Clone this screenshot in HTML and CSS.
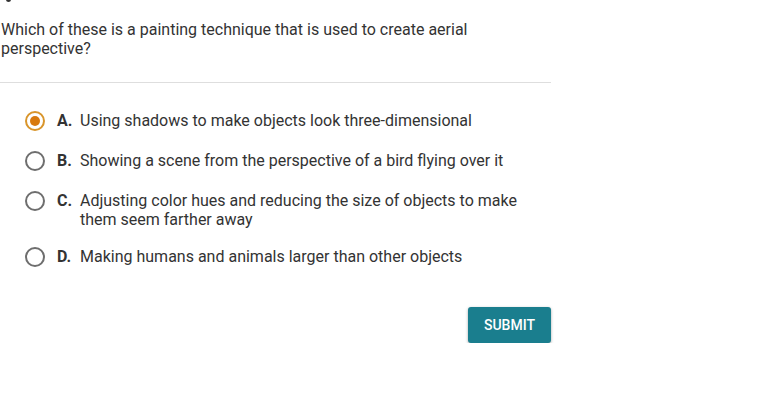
FILE: index.html
```html
<!DOCTYPE html>
<html>
<head>
<meta charset="utf-8">
<link rel="stylesheet" href="styles.css">
</head>
<body>
<div class="page">
  <div class="top-mark"></div>
  <div class="question">Which of these is a painting technique that is used to create aerial perspective?</div>
  <div class="divider"></div>
  <ul class="options">
    <li class="option selected"><span class="radio"></span><span class="letter">A.</span><span class="text">Using shadows to make objects look three-dimensional</span></li>
    <li class="option"><span class="radio"></span><span class="letter">B.</span><span class="text">Showing a scene from the perspective of a bird flying over it</span></li>
    <li class="option"><span class="radio"></span><span class="letter">C.</span><span class="text">Adjusting color hues and reducing the size of objects to make them seem farther away</span></li>
    <li class="option"><span class="radio"></span><span class="letter">D.</span><span class="text">Making humans and animals larger than other objects</span></li>
  </ul>
  <div class="actions"><button class="submit">SUBMIT</button></div>
</div>
</body>
</html>
```
FILE: styles.css
```css
html, body { margin: 0; padding: 0; background: #fff; }
body { font-family: Roboto, "Liberation Sans", sans-serif; color: #333; }
.page { width: 551px; position: relative; }
.top-mark { position: absolute; left: 6px; top: -3px; width: 5px; height: 5px; border-radius: 50%; background: #333; }
.question { padding: 20px 0 0 1px; font-size: 16px; line-height: 19px; width: 500px; }
.divider { height: 1px; background: #dedede; margin-top: 24px; }
.options { list-style: none; margin: 0; padding: 0; margin-top: 28px; }
.option { display: flex; align-items: flex-start; font-size: 16px; line-height: 19px; margin-bottom: 20px; padding-left: 25px; }
.option:nth-child(3) { margin-bottom: 18px; }
.radio { width: 16px; height: 16px; border: 2px solid #6e6e6e; border-radius: 50%; box-sizing: content-box; flex: none; position: relative; }
.selected .radio { border-color: #d9952b; }
.selected .radio::after { content: ""; position: absolute; left: 3px; top: 3px; width: 10px; height: 10px; border-radius: 50%; background: #d8790d; }
.letter { font-weight: 700; width: 23px; flex: none; margin-left: 12px; }
.text { width: 450px; }
.actions { display: flex; justify-content: flex-end; margin-top: 40px; }
.submit { background: #1a7e8e; color: #fff; border: none; border-radius: 3px; width: 83px; height: 36px; font-family: Roboto, "Liberation Sans", sans-serif; font-size: 14px; font-weight: 500; box-shadow: 0 1px 3px rgba(0,0,0,0.35); padding: 0; }
```
